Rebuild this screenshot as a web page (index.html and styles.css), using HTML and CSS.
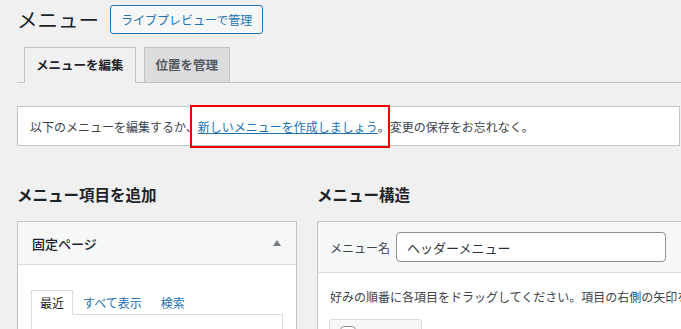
FILE: index.html
```html
<!DOCTYPE html>
<html lang="ja">
  <head>
    <meta charset="UTF-8" />
    <meta name="viewport" content="width=device-width, initial-scale=1.0" />
    <title>メニュー</title>
    <link rel="stylesheet" href="styles.css">
  </head>
  <body>
    <div class="wrap">
      <!-- Page title -->
      <div class="page-head">
        <h1>メニュー</h1>
        <a class="btn-outline" href="#">ライブプレビューで管理</a>
      </div>

      <!-- Tabs -->
      <nav class="tabs">
        <a class="tab active" href="#">メニューを編集</a>
        <a class="tab" href="#">位置を管理</a>
      </nav>

      <!-- Notice -->
      <div class="notice">
        以下のメニューを編集するか、<span class="mark"><a href="#">新しいメニューを作成しましょう</a></span>。変更の保存をお忘れなく。
      </div>

      <div class="columns">
        <!-- Add menu items -->
        <div class="col-left">
          <h2>メニュー項目を追加</h2>
          <div class="box">
            <div class="box-head">
              <h3>固定ページ</h3>
              <span class="toggle"></span>
            </div>
            <div class="box-body">
              <div class="mini-tabs">
                <span class="mini-tab active">最近</span>
                <a class="mini-tab" href="#">すべて表示</a>
                <a class="mini-tab" href="#">検索</a>
              </div>
              <div class="mini-panel"></div>
            </div>
          </div>
        </div>

        <!-- Menu structure -->
        <div class="col-right">
          <h2>メニュー構造</h2>
          <div class="box">
            <div class="box-head name-row">
              <label for="menu-name">メニュー名</label>
              <input id="menu-name" type="text" value="ヘッダーメニュー">
            </div>
            <div class="box-body structure">
              <p>好みの順番に各項目をドラッグしてください。項目の右側の矢印をクリックすると、追加の設定オプションが表示されます。</p>
              <span class="bulk"><span class="check"></span>一括選択</span>
            </div>
          </div>
        </div>
      </div>
    </div>
  </body>
</html>
```

FILE: styles.css
```css
body {
  margin: 0;
  width: 681px;
  height: 329px;
  overflow: hidden;
  background-color: #f0f0f1;
  color: #1d2327;
  font-family: 'Noto Sans CJK JP', 'Noto Sans', sans-serif;
}
a {
  color: #2271b1;
}
.wrap {
  padding-left: 17px;
}
.page-head {
  display: flex;
  align-items: center;
  gap: 11px;
  height: 39px;
}
.page-head h1 {
  margin: 0;
  font-size: 20.5px;
  font-weight: 400;
  line-height: 1;
}
.btn-outline {
  display: flex;
  align-items: center;
  box-sizing: border-box;
  height: 29px;
  padding: 0 10px;
  border: 1px solid #2271b1;
  border-radius: 3px;
  background-color: #f6f7f7;
  font-size: 12px;
  text-decoration: none;
}
.tabs {
  display: flex;
  gap: 8px;
  height: 35px;
  margin-top: 8px;
  padding-left: 7px;
  border-bottom: 1px solid #c3c4c7;
}
.tab {
  box-sizing: border-box;
  height: 36px;
  margin-bottom: -1px;
  padding: 0 11px;
  border: 1px solid #c3c4c7;
  background-color: #dcdcde;
  color: #50575e;
  font-size: 12.5px;
  font-weight: 600;
  line-height: 34px;
  text-decoration: none;
}
.tab.active {
  background-color: #f0f0f1;
  border-bottom-color: #f0f0f1;
  color: #1d2327;
}
.notice {
  display: flex;
  align-items: center;
  box-sizing: border-box;
  height: 40px;
  margin: 23px 1px 0 0;
  padding: 0 12px;
  border: 1px solid #c3c4c7;
  background-color: #fff;
  color: #3c434a;
  font-size: 12px;
  white-space: nowrap;
}
.mark {
  position: relative;
}
.mark::after {
  content: "";
  position: absolute;
  left: -8px;
  right: -12px;
  top: -13px;
  bottom: -13px;
  border: 2px solid #e00;
}
.columns {
  display: flex;
  gap: 20px;
}
.col-left {
  flex: 0 0 280px;
}
.col-right {
  flex: 0 0 420px;
}
.columns h2 {
  margin: 37px 0 16px;
  font-size: 15.5px;
  font-weight: 700;
  line-height: 22px;
}
.box {
  border: 1px solid #c3c4c7;
  background-color: #fff;
  height: 200px;
}
.box-head {
  display: flex;
  align-items: center;
  justify-content: space-between;
  height: 42px;
  padding: 0 15px 0 14px;
  border-bottom: 1px solid #dcdcde;
  background-color: #f6f7f7;
}
.box-head h3 {
  margin: 0;
  font-size: 13px;
  font-weight: 500;
  color: #1d2327;
}
.toggle {
  width: 0;
  height: 0;
  border-left: 4px solid transparent;
  border-right: 4px solid transparent;
  border-bottom: 6px solid #787c82;
}
.box-body {
  padding: 25px 13px 0;
}
.mini-tabs {
  display: flex;
  gap: 1px;
}
.mini-tab {
  box-sizing: border-box;
  height: 25px;
  margin-bottom: -1px;
  padding: 0 8px;
  border: 1px solid transparent;
  font-size: 12px;
  line-height: 23px;
  text-decoration: none;
}
.mini-tab.active {
  border-color: #dcdcde;
  border-bottom-color: #fff;
  background-color: #fff;
  color: #1d2327;
}
.mini-panel {
  height: 80px;
  border: 1px solid #dcdcde;
}
.name-row {
  justify-content: flex-start;
  gap: 6px;
  height: 50px;
  padding: 0 12px;
}
.name-row label {
  font-size: 12px;
  color: #3c434a;
}
.name-row input {
  box-sizing: border-box;
  width: 270px;
  height: 30px;
  padding: 0 10px;
  border: 1px solid #8c8f94;
  border-radius: 4px;
  background-color: #fff;
  color: #2c3338;
  font-family: inherit;
  font-size: 13px;
}
.structure {
  padding: 15px 12px 0;
}
.structure p {
  margin: 0;
  font-size: 12px;
  line-height: 18px;
  color: #3c434a;
  white-space: nowrap;
}
.bulk {
  display: inline-flex;
  align-items: center;
  gap: 6px;
  box-sizing: border-box;
  height: 30px;
  margin-top: 13px;
  margin-left: -1px;
  padding: 0 10px;
  width: 93px;
  border: 1px solid #dcdcde;
  border-radius: 3px;
  background-color: #f6f7f7;
  color: #a7aaad;
  font-size: 12px;
}
.check {
  width: 14px;
  height: 14px;
  border: 1px solid #8c8f94;
  border-radius: 4px;
  background-color: #fff;
}
```
